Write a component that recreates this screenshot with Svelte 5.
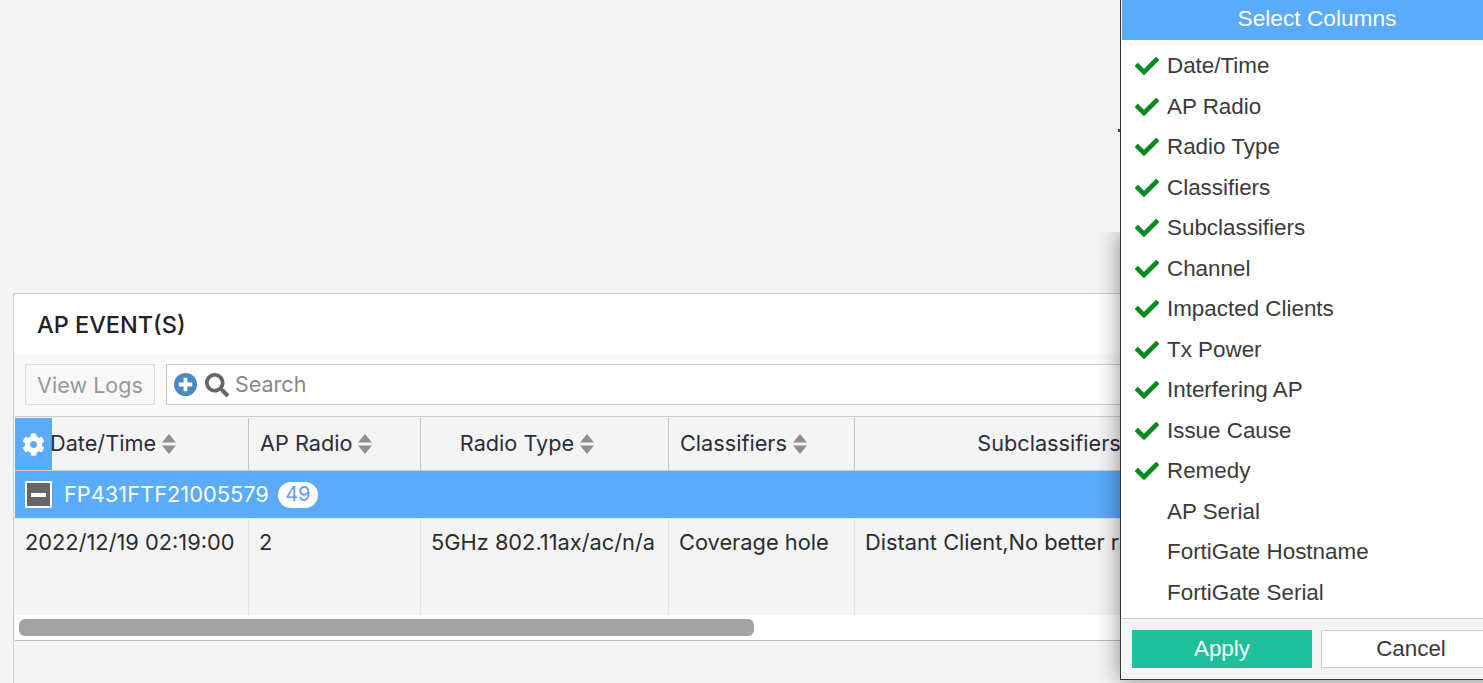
<script>
  const headers = [
    { label: 'Date/Time', cls: 'date', gear: true },
    { label: 'AP Radio', cls: 'left' },
    { label: 'Radio Type', cls: 'center' },
    { label: 'Classifiers', cls: 'left' },
    { label: 'Subclassifiers', cls: 'center' },
  ]
  const cells = [
    '2022/12/19 02:19:00',
    '2',
    '5GHz 802.11ax/ac/n/a',
    'Coverage hole',
    'Distant Client,No better radio',
  ]
  const columns = [
    { name: 'Date/Time', on: true },
    { name: 'AP Radio', on: true },
    { name: 'Radio Type', on: true },
    { name: 'Classifiers', on: true },
    { name: 'Subclassifiers', on: true },
    { name: 'Channel', on: true },
    { name: 'Impacted Clients', on: true },
    { name: 'Tx Power', on: true },
    { name: 'Interfering AP', on: true },
    { name: 'Issue Cause', on: true },
    { name: 'Remedy', on: true },
    { name: 'AP Serial', on: false },
    { name: 'FortiGate Hostname', on: false },
    { name: 'FortiGate Serial', on: false },
  ]
</script>

<div class="page">
  <section class="panel">
    <h2 class="title">AP EVENT(S)</h2>

    <div class="toolbar">
      <button class="logs" disabled>View Logs</button>
      <div class="search">
        <svg class="plus" viewBox="0 0 24 24">
          <circle cx="12" cy="12" r="12" fill="#4a87c5" />
          <path d="M10 5h4v5h5v4h-5v5h-4v-5H5v-4h5z" fill="#fff" />
        </svg>
        <svg class="glass" viewBox="0 0 512 512">
          <path fill="#666" d="M505 442.7L405.3 343c-4.5-4.5-10.6-7-17-7H372c27.6-35.3 44-79.7 44-128C416 93.1 322.9 0 208 0S0 93.1 0 208s93.1 208 208 208c48.3 0 92.7-16.4 128-44v16.3c0 6.4 2.5 12.5 7 17l99.7 99.7c9.4 9.4 24.6 9.4 33.9 0l28.3-28.3c9.4-9.4 9.4-24.6.1-34zM208 336c-70.7 0-128-57.2-128-128 0-70.7 57.2-128 128-128 70.7 0 128 57.2 128 128 0 70.7-57.2 128-128 128z" />
        </svg>
        <span class="hint">Search</span>
      </div>
    </div>

    <div class="table">
      <div class="row head">
        {#each headers as h}
          <div class="th {h.cls}">
            {#if h.gear}
              <span class="gear">
                <svg viewBox="0 0 512 512">
                  <path fill="#fff" d="M487.4 315.7l-42.6-24.6c4.3-23.2 4.3-47 0-70.2l42.6-24.6c4.9-2.8 7.1-8.6 5.5-14-11.1-35.6-30-67.8-54.7-94.6-3.8-4.1-10-5.1-14.8-2.3L380.8 110c-17.9-15.4-38.5-27.3-60.8-35.1V25.8c0-5.6-3.9-10.5-9.4-11.7-36.7-8.2-74.3-7.8-109.2 0-5.5 1.2-9.4 6.1-9.4 11.7V75c-22.2 7.9-42.8 19.8-60.8 35.1L88.7 85.5c-4.9-2.8-11-1.9-14.8 2.3-24.7 26.7-43.6 58.9-54.7 94.6-1.7 5.4.6 11.2 5.5 14L67.3 221c-4.3 23.2-4.3 47 0 70.2l-42.6 24.6c-4.9 2.8-7.1 8.6-5.5 14 11.1 35.6 30 67.8 54.7 94.6 3.8 4.1 10 5.1 14.8 2.3l42.6-24.6c17.9 15.4 38.5 27.3 60.8 35.1v49.2c0 5.6 3.9 10.5 9.4 11.7 36.7 8.2 74.3 7.8 109.2 0 5.5-1.2 9.4-6.1 9.4-11.7v-49.2c22.2-7.9 42.8-19.8 60.8-35.1l42.6 24.6c4.9 2.8 11 1.9 14.8-2.3 24.7-26.7 43.6-58.9 54.7-94.6 1.5-5.5-.7-11.3-5.6-14.1zM256 336c-44.1 0-80-35.9-80-80s35.9-80 80-80 80 35.9 80 80-35.9 80-80 80z" />
                </svg>
              </span>
            {/if}
            <span class="label">{h.label}</span>
            <svg class="sort" viewBox="0 0 14 20">
              <path fill="#8f8f8f" d="M7 0l7 8.5H0zM0 11.5h14L7 20z" />
            </svg>
          </div>
        {/each}
      </div>

      <div class="group">
        <span class="toggle"><i></i></span>
        <span class="serial">FP431FTF21005579</span>
        <span class="count">49</span>
      </div>

      <div class="row data">
        {#each cells as c}
          <div class="td">{c}</div>
        {/each}
      </div>

      <div class="scroll"><div class="thumb"></div></div>
    </div>
  </section>

  <span class="tick"></span>

  <aside class="popup">
    <div class="popup-head">Select Columns</div>
    <ul>
      {#each columns as col}
        <li>
          {#if col.on}
            <svg viewBox="0 0 512 512">
              <path fill="#078a1f" d="M173.898 439.404l-166.4-166.4c-9.997-9.997-9.997-26.206 0-36.204l36.203-36.204c9.997-9.998 26.207-9.998 36.204 0L192 312.69 432.095 72.596c9.997-9.997 26.207-9.997 36.204 0l36.203 36.204c9.997 9.997 9.997 26.206 0 36.204l-294.4 294.401c-9.998 9.997-26.207 9.997-36.204-.001z" />
            </svg>
          {/if}
          <span>{col.name}</span>
        </li>
      {/each}
    </ul>
    <div class="popup-foot">
      <button class="apply">Apply</button>
      <button class="cancel">Cancel</button>
    </div>
  </aside>
</div>

<style>
  :global(body) {
    margin: 0;
    background: #f4f4f4;
  }

  .page {
    position: relative;
    height: 683px;
    overflow: hidden;
    padding: 293px 0 0 13px;
    box-sizing: border-box;
    font-family: Inter, 'Liberation Sans', sans-serif;
    color: #333;
  }

  .panel {
    width: 1470px;
    height: 390px;
    box-sizing: border-box;
    border: 1px solid #ccc;
    border-bottom: none;
    border-right: none;
  }

  .title {
    margin: 0;
    height: 59px;
    padding-left: 23px;
    line-height: 61px;
    background: #fff;
    font-size: 23.5px;
    font-weight: 500;
    color: #222;
  }

  .toolbar {
    display: flex;
    gap: 11px;
    height: 63px;
    box-sizing: border-box;
    padding: 11px 0 0 10px;
    background: #fafafa;
    margin-left: 1px;
  }

  .logs {
    width: 130px;
    height: 41px;
    padding: 0;
    border: 1px solid #ddd;
    background: #f8f8f8;
    color: #999;
    font: 21.6px Inter, sans-serif;
  }

  .search {
    flex: 1;
    display: flex;
    align-items: center;
    height: 41px;
    box-sizing: border-box;
    border: 1px solid #ccc;
    background: #fff;
    padding-left: 7px;
    font-size: 21.5px;
    color: #888;
  }

  .hint {
    margin-top: -2px;
  }

  .plus {
    width: 23px;
    height: 23px;
  }

  .glass {
    width: 24px;
    height: 24px;
    margin: 0 6px 0 8px;
  }

  .table {
    margin-left: 1px;
    border-top: 1px solid #ccc;
  }

  .row {
    display: grid;
    grid-template-columns: 234px 172px 248px 186px 444px;
  }

  .head {
    height: 54px;
    padding-top: 1px;
    box-sizing: border-box;
    background: #f4f4f4;
    border-bottom: 1px solid #ccc;
    font-size: 21.7px;
    color: #2c2c3a;
  }

  .th {
    display: flex;
    align-items: center;
    border-right: 1px solid #c4c4c4;
    height: 52px;
  }

  .label {
    margin-top: -2px;
  }

  .th.left {
    padding-left: 11px;
  }

  .th.center {
    justify-content: center;
    padding-right: 35px;
  }

  .gear {
    width: 37px;
    height: 52px;
    margin-right: -2px;
    background: #5babfb;
    display: flex;
    align-items: center;
    justify-content: center;
  }

  .gear svg {
    width: 23px;
    height: 23px;
  }

  .sort {
    width: 14px;
    height: 20px;
    margin-left: 6px;
  }

  .group {
    display: flex;
    align-items: center;
    height: 47px;
    background: #5babfb;
    color: #fff;
    padding-left: 10px;
    font-size: 21.8px;
  }

  .toggle {
    width: 27px;
    height: 27px;
    box-sizing: border-box;
    border: 2px solid #fff;
    background: #666;
    border-radius: 1px;
    display: flex;
    align-items: center;
    justify-content: center;
    margin-right: 12px;
  }

  .toggle i {
    width: 15px;
    height: 4px;
    background: #fff;
  }

  .serial {
    margin-top: -1px;
  }

  .count {
    margin-left: 9px;
    width: 40px;
    height: 26px;
    line-height: 25px;
    border-radius: 13px;
    background: #fff;
    color: #5f9cf0;
    text-align: center;
    font-size: 20px;
  }

  .data {
    height: 97px;
    box-sizing: border-box;
    border-top: 1px solid #e6e6e6;
    background: #f4f4f4;
    font-size: 21.8px;
    color: #2c2c2c;
  }

  .td {
    padding: 10px 0 0 10px;
    border-right: 1px solid #e2e2e2;
    white-space: nowrap;
    overflow: hidden;
  }

  .scroll {
    height: 26px;
    box-sizing: border-box;
    padding: 4px 0 0 4px;
    background: #fff;
    border-bottom: 1px solid #bbb;
  }

  .thumb {
    width: 735px;
    height: 17px;
    border-radius: 6px;
    background: #a3a3a3;
  }

  .tick {
    position: absolute;
    left: 1118px;
    top: 129px;
    width: 3px;
    height: 3px;
    background: #444;
  }

  .popup {
    position: absolute;
    left: 1120px;
    top: 0;
    width: 392px;
    height: 680px;
    box-sizing: border-box;
    display: flex;
    flex-direction: column;
    background: #fff;
    border-left: 1px solid #333;
    border-bottom: 1px solid #333;
    padding-left: 1px;
    font-family: 'Liberation Sans', Arial, sans-serif;
    font-size: 22.4px;
  }

  /* the shadow only shows below the top band */
  .popup::before {
    content: '';
    position: absolute;
    left: -1px;
    right: 0;
    top: 232px;
    bottom: -1px;
    box-shadow: 0 0 22px rgba(0, 0, 0, 0.45);
    clip-path: inset(0 0 -40px -40px);
    pointer-events: none;
  }

  .popup-head {
    flex: none;
    height: 40px;
    line-height: 37px;
    background: #5babfb;
    color: #fff;
    text-align: center;
    font-size: 22.7px;
  }

  ul {
    flex: 1;
    min-height: 0;
    margin: 0;
    padding: 6px 0 0;
    list-style: none;
    border-top: 6px solid #fafafa;
  }

  li {
    display: flex;
    align-items: center;
    height: 40.5px;
    box-sizing: border-box;
    padding-left: 45px;
    position: relative;
    color: #3a3a3a;
    margin-top: -6px;
    margin-bottom: 6px;
  }

  li svg {
    position: absolute;
    left: 13px;
    top: 8px;
    width: 24px;
    height: 24px;
  }

  .popup-foot {
    flex: none;
    display: flex;
    gap: 9px;
    height: 61px;
    box-sizing: border-box;
    padding: 11px 0 0 10px;
    background: #f4f4f4;
    border-top: 1px solid #ccc;
  }

  .popup-foot button {
    width: 180px;
    height: 38px;
    padding: 0;
    font: 22.4px 'Liberation Sans', Arial, sans-serif;
  }

  .apply {
    border: none;
    background: #20bf9c;
    color: #fff;
  }

  .cancel {
    border: 1px solid #ccc;
    background: #fff;
    color: #3a3a3a;
  }
</style>
